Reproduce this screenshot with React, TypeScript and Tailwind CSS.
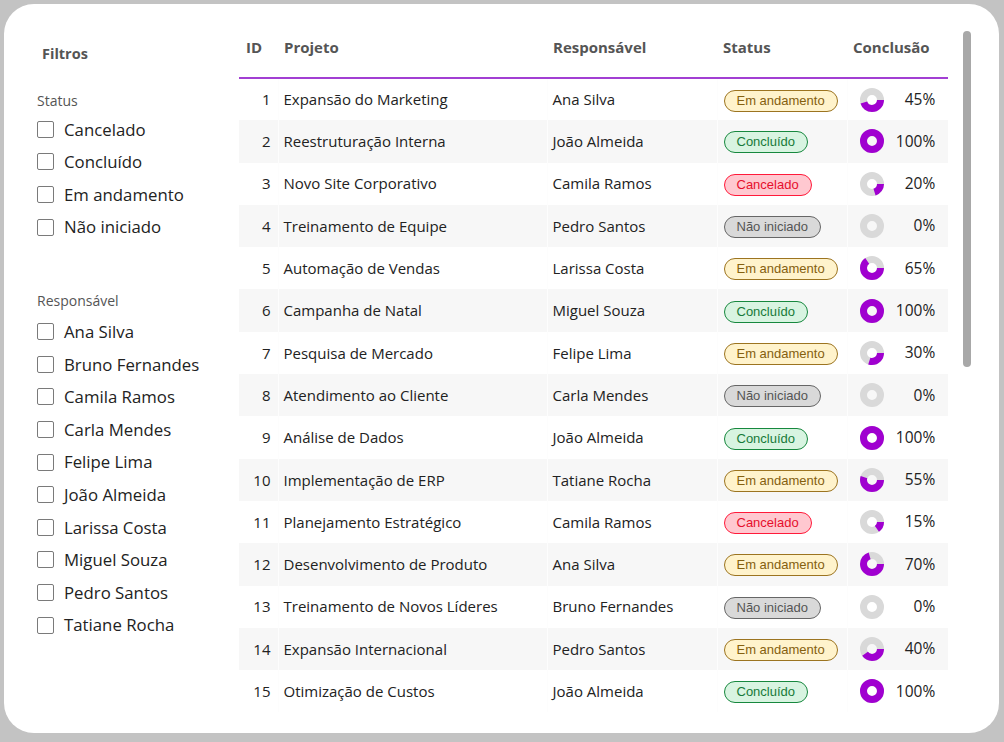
import React from "react";

type Status = "Em andamento" | "Concluído" | "Cancelado" | "Não iniciado";

const rows: [number, string, string, Status, number][] = [
  [1, "Expansão do Marketing", "Ana Silva", "Em andamento", 45],
  [2, "Reestruturação Interna", "João Almeida", "Concluído", 100],
  [3, "Novo Site Corporativo", "Camila Ramos", "Cancelado", 20],
  [4, "Treinamento de Equipe", "Pedro Santos", "Não iniciado", 0],
  [5, "Automação de Vendas", "Larissa Costa", "Em andamento", 65],
  [6, "Campanha de Natal", "Miguel Souza", "Concluído", 100],
  [7, "Pesquisa de Mercado", "Felipe Lima", "Em andamento", 30],
  [8, "Atendimento ao Cliente", "Carla Mendes", "Não iniciado", 0],
  [9, "Análise de Dados", "João Almeida", "Concluído", 100],
  [10, "Implementação de ERP", "Tatiane Rocha", "Em andamento", 55],
  [11, "Planejamento Estratégico", "Camila Ramos", "Cancelado", 15],
  [12, "Desenvolvimento de Produto", "Ana Silva", "Em andamento", 70],
  [13, "Treinamento de Novos Líderes", "Bruno Fernandes", "Não iniciado", 0],
  [14, "Expansão Internacional", "Pedro Santos", "Em andamento", 40],
  [15, "Otimização de Custos", "João Almeida", "Concluído", 100],
];

const badgeCls: Record<Status, string> = {
  "Em andamento": "bg-[#fff3cc] border-[#9c7420] text-[#85600f]",
  "Concluído": "bg-[#d8f4e1] border-[#17883e] text-[#177a38]",
  "Cancelado": "bg-[#ffc8d0] border-[#ff1a3a] text-[#e60f2c]",
  "Não iniciado": "bg-[#d9d9d9] border-[#666666] text-[#555555]",
};

const statuses = ["Cancelado", "Concluído", "Em andamento", "Não iniciado"];
const people = [
  "Ana Silva",
  "Bruno Fernandes",
  "Camila Ramos",
  "Carla Mendes",
  "Felipe Lima",
  "João Almeida",
  "Larissa Costa",
  "Miguel Souza",
  "Pedro Santos",
  "Tatiane Rocha",
];

function Donut({ pct }: { pct: number }) {
  const r = 8.5;
  const c = 2 * Math.PI * r;
  return (
    <svg width="24" height="24" viewBox="0 0 24 24" className="shrink-0">
      <circle cx="12" cy="12" r={r} fill="none" stroke="#d9d9d9" strokeWidth="7" />
      {pct > 0 && (
        <circle
          cx="12"
          cy="12"
          r={r}
          fill="none"
          stroke="#a000d0"
          strokeWidth="7"
          strokeDasharray={`${(c * pct) / 100} ${c}`}
        />
      )}
    </svg>
  );
}

function Check({ label }: { label: string }) {
  return (
    <div className="flex h-[32.6px] items-center">
      <span className="h-[17px] w-[17px] shrink-0 rounded-[2px] border border-[#7a7a7a] bg-white" />
      <span className="ml-[10px] text-[16.8px] text-[#222222]">{label}</span>
    </div>
  );
}

export default function App() {
  return (
    <div
      className="h-[742px] w-[1004px] overflow-hidden bg-[#c3c3c3] pl-[4px] pt-[4px]"
      style={{ fontFamily: '"Open Sans", "Noto Sans", sans-serif' }}
    >
      <div className="flex h-[729px] w-[995px] rounded-[30px] bg-white">
        {/* Sidebar */}
        <div className="w-[235px] shrink-0 pl-[33px] pt-[40px]">
          <div className="pl-[5px] text-[14.5px] font-bold leading-[20px] text-[#555555]">Filtros</div>
          <div className="mt-[26px] text-[14px] leading-[22px] text-[#555555]">Status</div>
          <div className="mt-[1px]">
            {statuses.map((s) => (
              <Check key={s} label={s} />
            ))}
          </div>
          <div className="mt-[47px] text-[14px] leading-[22px] text-[#555555]">Responsável</div>
          <div className="mt-[3px]">
            {people.map((s) => (
              <Check key={s} label={s} />
            ))}
          </div>
        </div>

        {/* Table */}
        <div className="w-[709px] shrink-0 pt-[14px]">
          <table className="w-[709px] table-fixed border-collapse text-[15px] text-[#222222]">
            <colgroup>
              <col className="w-[39px]" />
              <col className="w-[269px]" />
              <col className="w-[170px]" />
              <col className="w-[130px]" />
              <col className="w-[101px]" />
            </colgroup>
            <thead>
              <tr className="h-[60px] border-b-2 border-[#a23fd3] text-left text-[#555555]">
                <th className="pl-[7px] font-bold">ID</th>
                <th className="pl-[6px] font-bold">Projeto</th>
                <th className="pl-[6px] font-bold">Responsável</th>
                <th className="pl-[6px] font-bold">Status</th>
                <th className="pl-[6px] font-bold">Conclusão</th>
              </tr>
            </thead>
            <tbody>
              {rows.map(([id, proj, resp, st, pct]) => (
                <tr key={id} className={`h-[42.3px] ${id % 2 === 0 ? "bg-[#f7f7f7]" : "bg-white"}`}>
                  <td className="pr-[7px] text-right">{id}</td>
                  <td className="border-l border-[#fdfdfd] pl-[5px] whitespace-nowrap">{proj}</td>
                  <td className="border-l border-[#fdfdfd] pl-[5px] whitespace-nowrap">{resp}</td>
                  <td className="border-l border-[#fdfdfd] pl-[6px]">
                    <span
                      className={`inline-block rounded-full border px-[12px] text-[13px] leading-[20px] ${badgeCls[st]}`}
                      style={{ fontFamily: '"Liberation Sans", Arial, sans-serif' }}
                    >
                      {st}
                    </span>
                  </td>
                  <td className="border-l border-[#fdfdfd]">
                    <div className="flex items-center justify-center gap-[7px]">
                      <Donut pct={pct} />
                      <span className="w-[44px] text-right text-[15.5px]">{pct}%</span>
                    </div>
                  </td>
                </tr>
              ))}
            </tbody>
          </table>
        </div>

        {/* Scrollbar */}
        <div className="ml-[15px] pt-[27px]">
          <div className="h-[336px] w-[8px] rounded-full bg-[#a8a8a8]" />
        </div>
      </div>
    </div>
  );
}
